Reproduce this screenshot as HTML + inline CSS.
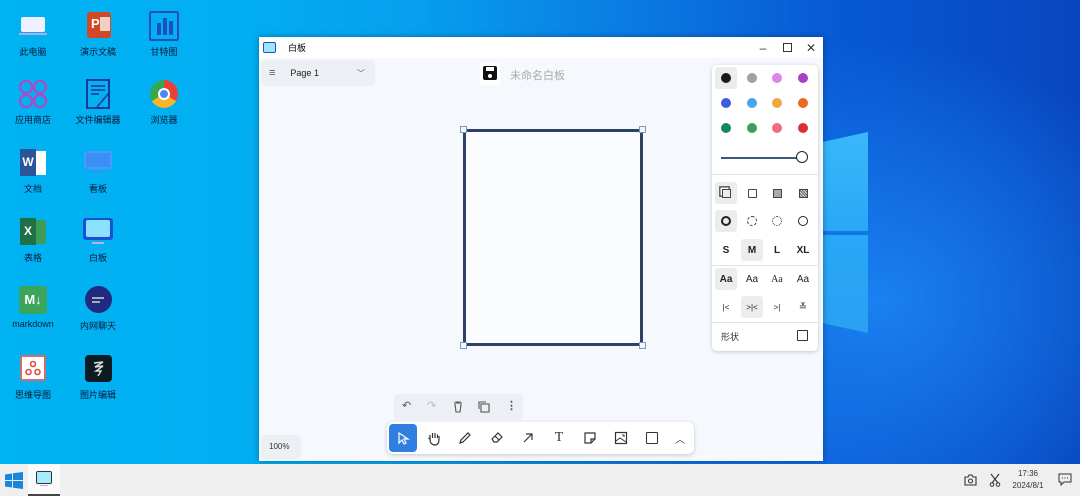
<!DOCTYPE html>
<html><head><meta charset="utf-8"><style>
*{margin:0;padding:0;box-sizing:border-box}
body{width:1080px;height:496px;overflow:hidden;position:relative;font-family:"Liberation Sans","Noto Sans CJK SC",sans-serif;
background:radial-gradient(ellipse 300px 260px at 880px 300px,#1a80f0 0%,rgba(20,110,235,0) 100%),linear-gradient(90deg,#00b3f2 0%,#02aef2 22%,#06a0ee 38%,#0a78e2 60%,#0858d4 78%,#0846c0 100%)}
.ic{position:absolute;width:60px;text-align:center;font-size:9px;color:#0a1a3a}
.ic .g{width:30px;height:30px;margin:0 auto 4px;position:relative}
.ic span{display:block;white-space:nowrap}
.win{position:absolute;left:259px;top:37px;width:564px;height:424px;background:#f5f8fc;box-shadow:0 0 6px rgba(0,0,0,.35)}
.tb{height:21px;background:#fff;font-size:9px;display:flex;align-items:center}
.pane{position:absolute;background:#fff;border-radius:5px;box-shadow:0 1px 4px rgba(0,0,0,.2)}
.dot{position:absolute;width:10px;height:10px;border-radius:50%}
.cell{position:absolute;width:22px;height:22px;display:flex;align-items:center;justify-content:center;font-size:10px;font-weight:bold;color:#222;border-radius:3px}
.sel{background:#ececec}
.tool{position:absolute;top:0;width:28px;height:28px;display:flex;align-items:center;justify-content:center}
</style></head><body>

<!-- windows logo panes -->
<div style="position:absolute;left:823px;top:132px;width:45px;height:99px;background:linear-gradient(180deg,#3ab8fa,#28a8f6);clip-path:polygon(0 10%,100% 0,100% 100%,0 100%)"></div>
<div style="position:absolute;left:823px;top:235px;width:45px;height:98px;background:linear-gradient(180deg,#28a8f6,#2aa0f2);clip-path:polygon(0 0,100% 0,100% 100%,0 90%)"></div>

<!-- desktop icons -->
<div class="ic" style="left:3px;top:11px"><div class="g"><div style="position:absolute;left:3px;top:6px;width:24px;height:15px;background:#eef0ff;border-radius:2px"></div><div style="position:absolute;left:1px;top:22px;width:28px;height:2px;background:#b8a8f0"></div></div><span>此电脑</span></div>
<div class="ic" style="left:68px;top:11px"><div class="g"><div style="position:absolute;left:4px;top:1px;width:24px;height:26px;background:#d24726;border-radius:3px;color:#fff;font-weight:bold;font-size:13px;line-height:24px;text-align:left;padding-left:4px">P</div><div style="position:absolute;left:17px;top:6px;width:10px;height:14px;background:#f3d0c4"></div></div><span>演示文稿</span></div>
<div class="ic" style="left:134px;top:11px"><div class="g"><div style="position:absolute;left:0;top:0;width:30px;height:30px;border:2px solid #1c4fc2;border-radius:2px"></div><div style="position:absolute;left:8px;top:12px;width:4px;height:12px;background:#1c4fc2"></div><div style="position:absolute;left:14px;top:7px;width:4px;height:17px;background:#1c4fc2"></div><div style="position:absolute;left:20px;top:10px;width:4px;height:14px;background:#1c4fc2"></div></div><span>甘特图</span></div>

<div class="ic" style="left:3px;top:79px"><div class="g"><svg width="30" height="30"><g fill="none" stroke="#a050c8" stroke-width="2.5"><circle cx="8" cy="8" r="6"/><circle cx="22" cy="8" r="6"/><circle cx="8" cy="22" r="6"/><circle cx="22" cy="22" r="6"/></g></svg></div><span>应用商店</span></div>
<div class="ic" style="left:68px;top:79px"><div class="g"><svg width="30" height="30"><rect x="4" y="1" width="22" height="28" fill="none" stroke="#1a3b9c" stroke-width="2"/><g stroke="#1a3b9c" stroke-width="1.6"><line x1="8" y1="7" x2="22" y2="7"/><line x1="8" y1="11" x2="22" y2="11"/><line x1="8" y1="15" x2="16" y2="15"/><line x1="14" y1="28" x2="26" y2="14"/></g></svg></div><span>文件编辑器</span></div>
<div class="ic" style="left:134px;top:79px"><div class="g"><div style="position:absolute;left:1px;top:1px;width:28px;height:28px;border-radius:50%;background:conic-gradient(#e94235 0 120deg,#f7b52b 120deg 240deg,#34a853 240deg 360deg)"></div><div style="position:absolute;left:9px;top:9px;width:12px;height:12px;border-radius:50%;background:#4a8af4;border:2px solid #fff"></div></div><span>浏览器</span></div>

<div class="ic" style="left:3px;top:148px"><div class="g"><div style="position:absolute;left:16px;top:3px;width:12px;height:24px;background:#fff"></div><div style="position:absolute;left:2px;top:1px;width:16px;height:27px;background:#2b5597;color:#fff;font-weight:bold;font-size:12px;line-height:27px">W</div></div><span>文档</span></div>
<div class="ic" style="left:68px;top:148px"><div class="g"><div style="position:absolute;left:1px;top:3px;width:28px;height:18px;background:#3a8ef5;border-radius:3px;border:2px solid #4a9cf8"></div><div style="position:absolute;left:8px;top:23px;width:14px;height:2px;background:#3a8ef5"></div></div><span>看板</span></div>

<div class="ic" style="left:3px;top:217px"><div class="g"><div style="position:absolute;left:16px;top:3px;width:12px;height:24px;background:#3f9b58"></div><div style="position:absolute;left:2px;top:1px;width:16px;height:27px;background:#1e7145;color:#fff;font-weight:bold;font-size:12px;line-height:27px">X</div></div><span>表格</span></div>
<div class="ic" style="left:68px;top:217px"><div class="g"><div style="position:absolute;left:0;top:1px;width:30px;height:22px;background:#1a50d8;border-radius:3px"></div><div style="position:absolute;left:3px;top:3px;width:24px;height:17px;background:#8ae2fc;border-radius:2px"></div><div style="position:absolute;left:9px;top:25px;width:12px;height:2px;background:#d0a8f0"></div></div><span>白板</span></div>

<div class="ic" style="left:3px;top:285px"><div class="g"><div style="position:absolute;left:1px;top:1px;width:28px;height:28px;background:#3ba55c;border-radius:3px;color:#fff;font-weight:bold;font-size:13px;line-height:28px">M↓</div></div><span>markdown</span></div>
<div class="ic" style="left:68px;top:285px"><div class="g"><div style="position:absolute;left:2px;top:1px;width:27px;height:27px;background:#1f2a80;border-radius:50%"></div><div style="position:absolute;left:9px;top:12px;width:12px;height:2px;background:#aab"></div><div style="position:absolute;left:9px;top:16px;width:8px;height:2px;background:#aab"></div></div><span>内网聊天</span></div>

<div class="ic" style="left:3px;top:354px"><div class="g"><div style="position:absolute;left:2px;top:1px;width:26px;height:26px;background:#fff;border:2px solid #d86a6a;border-radius:3px"></div><svg style="position:absolute;left:7px;top:6px" width="16" height="16"><g fill="none" stroke="#e04848" stroke-width="1.6"><circle cx="8" cy="4" r="2.5"/><circle cx="3.5" cy="12" r="2.5"/><circle cx="12.5" cy="12" r="2.5"/></g></svg></div><span>思维导图</span></div>
<div class="ic" style="left:68px;top:354px"><div class="g"><div style="position:absolute;left:2px;top:1px;width:27px;height:27px;background:#0d1a22;border-radius:4px"></div><svg style="position:absolute;left:9px;top:6px" width="14" height="18"><path d="M2 3 L11 2 L3 7 L11 6 L4 11 L9 11 L6 16" fill="none" stroke="#ddd" stroke-width="1.4"/></svg></div><span>图片编辑</span></div>

<!-- window -->
<div class="win">
 <div class="tb"><div style="margin-left:4px;width:13px;height:11px;border:1.5px solid #2050c8;background:#9ee6fb;border-radius:2px"></div><span style="margin-left:12px">白板</span>
  <div style="margin-left:auto;display:flex;gap:0;font-size:12px;color:#333">
   <span style="width:24px;text-align:center">–</span><span style="width:24px;text-align:center"><span style="display:inline-block;width:9px;height:9px;border:1.3px solid #333"></span></span><span style="width:24px;text-align:center">✕</span></div></div>
 <!-- page selector -->
 <div style="position:absolute;left:2px;top:23px;width:114px;height:26px;background:#eceff3;border-radius:4px;font-size:9px;display:flex;align-items:center;color:#222">
  <span style="margin-left:8px;font-size:11px;color:#555">≡</span><span style="margin-left:15px">Page 1</span><span style="margin-left:auto;margin-right:10px;font-size:8px;color:#555">﹀</span></div>
 <!-- save -->
 <div style="position:absolute;left:221px;top:26px;width:20px;height:22px;background:#fff;border-radius:3px"><div style="position:absolute;left:3px;top:3px;width:14px;height:14px;background:#111;border-radius:2px"></div><div style="position:absolute;left:6px;top:4px;width:8px;height:4px;background:#fff"></div><div style="position:absolute;left:8px;top:11px;width:4px;height:4px;background:#fff;border-radius:50%"></div></div>
 <div style="position:absolute;left:251px;top:30px;font-size:11px;color:#aaa">未命名白板</div>
 <!-- rectangle -->
 <div style="position:absolute;left:204px;top:92px;width:180px;height:217px;border:3px solid #2d4264;border-radius:2px;background:#fafcff"></div>
 <div style="position:absolute;left:201px;top:89px;width:7px;height:7px;background:#f3f6fb;border:1px solid #7a9cc0"></div>
 <div style="position:absolute;left:380px;top:89px;width:7px;height:7px;background:#f3f6fb;border:1px solid #7a9cc0"></div>
 <div style="position:absolute;left:201px;top:305px;width:7px;height:7px;background:#f3f6fb;border:1px solid #7a9cc0"></div>
 <div style="position:absolute;left:380px;top:305px;width:7px;height:7px;background:#f3f6fb;border:1px solid #7a9cc0"></div>

 <!-- style pane -->
 <div class="pane" style="left:453px;top:28px;width:106px;height:286px">
  <div class="cell sel" style="left:3px;top:2px"></div>
  <div class="dot" style="left:9px;top:8px;background:#1a1a1a"></div><div class="dot" style="left:35px;top:8px;background:#a0a0a0"></div><div class="dot" style="left:60px;top:8px;background:#e082ec"></div><div class="dot" style="left:86px;top:8px;background:#aa3ec8"></div>
  <div class="dot" style="left:9px;top:33px;background:#3c5ede"></div><div class="dot" style="left:35px;top:33px;background:#48a4ec"></div><div class="dot" style="left:60px;top:33px;background:#eeaa40"></div><div class="dot" style="left:86px;top:33px;background:#ea6a22"></div>
  <div class="dot" style="left:9px;top:58px;background:#128a5a"></div><div class="dot" style="left:35px;top:58px;background:#3e9e58"></div><div class="dot" style="left:60px;top:58px;background:#ec6e82"></div><div class="dot" style="left:86px;top:58px;background:#de3030"></div>
  <div style="position:absolute;left:9px;top:92px;width:80px;height:2px;background:#3a5a80"></div>
  <div style="position:absolute;left:84px;top:86px;width:12px;height:12px;border-radius:50%;background:#fff;border:1.5px solid #222"></div>
  <div style="position:absolute;left:0;top:109px;width:106px;height:1px;background:#e4e4e4"></div>
  <div class="cell sel" style="left:3px;top:117px"><span style="width:9px;height:9px;border:1.3px solid #444;box-shadow:-2px -2px 0 -0.5px #fff,-2px -2px 0 .8px #444"></span></div>
  <div class="cell" style="left:29px;top:117px"><span style="width:9px;height:9px;border:1.3px solid #444;border-radius:1px"></span></div>
  <div class="cell" style="left:54px;top:117px"><span style="width:9px;height:9px;border:1.3px solid #444;background:#aaa"></span></div>
  <div class="cell" style="left:80px;top:117px"><span style="width:9px;height:9px;border:1.3px solid #444;background:repeating-linear-gradient(45deg,#666 0 1px,#ddd 1px 2px)"></span></div>
  <div class="cell sel" style="left:3px;top:145px"><span style="width:10px;height:10px;border:2.5px solid #222;border-radius:50%"></span></div>
  <div class="cell" style="left:29px;top:145px"><span style="width:10px;height:10px;border:1.3px dashed #333;border-radius:50%"></span></div>
  <div class="cell" style="left:54px;top:145px"><span style="width:10px;height:10px;border:1.3px dotted #333;border-radius:50%"></span></div>
  <div class="cell" style="left:80px;top:145px"><span style="width:10px;height:10px;border:1.5px solid #222;border-radius:50%"></span></div>
  <div class="cell" style="left:3px;top:174px">S</div><div class="cell sel" style="left:29px;top:174px">M</div><div class="cell" style="left:54px;top:174px">L</div><div class="cell" style="left:80px;top:174px">XL</div>
  <div style="position:absolute;left:0;top:200px;width:106px;height:1px;background:#e4e4e4"></div>
  <div class="cell sel" style="left:3px;top:203px;font-weight:bold">Aa</div><div class="cell" style="left:29px;top:203px;font-weight:normal">Aa</div><div class="cell" style="left:54px;top:203px;font-weight:normal;font-family:'Liberation Serif',serif">Aa</div><div class="cell" style="left:80px;top:203px;font-weight:normal">Aa</div>
  <div class="cell" style="left:3px;top:231px;font-weight:normal;font-size:8px">|&lt;</div><div class="cell sel" style="left:29px;top:231px;font-weight:normal;font-size:8px">&gt;|&lt;</div><div class="cell" style="left:54px;top:231px;font-weight:normal;font-size:8px">&gt;|</div><div class="cell" style="left:80px;top:231px;font-weight:normal;font-size:10px">≚</div>
  <div style="position:absolute;left:0;top:257px;width:106px;height:1px;background:#e4e4e4"></div>
  <div style="position:absolute;left:9px;top:265px;font-size:9px;color:#333">形状</div>
  <div style="position:absolute;left:85px;top:265px;width:11px;height:11px;border:1.3px solid #333;border-radius:1px"></div>
 </div>

 <!-- action bar -->
 <div style="position:absolute;left:135px;top:357px;width:129px;height:26px;background:#eceff3;border-radius:4px;font-size:11px;color:#555">
  <span style="position:absolute;left:8px;top:5px">↶</span><span style="position:absolute;left:33px;top:5px;color:#bbb">↷</span>
  <svg style="position:absolute;left:59px;top:7px" width="10" height="12"><path d="M1 2H9M3 2V1H7V2M2 3L3 11H7L8 3" fill="none" stroke="#555" stroke-width="1.1"/></svg>
  <svg style="position:absolute;left:84px;top:7px" width="12" height="12"><rect x="3" y="3" width="8" height="8" fill="none" stroke="#555" stroke-width="1.1"/><path d="M1 8V1H8" fill="none" stroke="#555" stroke-width="1.1"/></svg>
  <span style="position:absolute;left:112px;top:5px;font-weight:bold">⋮</span></div>
 <div style="position:absolute;left:2px;top:398px;width:40px;height:24px;background:#eceff3;border-radius:4px;font-size:8px;color:#333;padding:7px 0 0 8px">100%</div>

 <!-- toolbar -->
 <div class="pane" style="left:128px;top:385px;width:307px;height:32px;border-radius:6px">
  <div class="tool" style="left:2px;top:2px;background:#2f7fe0;border-radius:4px"><svg width="14" height="14"><path d="M3 2L3 12L6 9L8 13L10 12L8 8L12 8Z" fill="none" stroke="#fff" stroke-width="1.2"/></svg></div>
  <div class="tool" style="left:33px;top:2px"><svg width="16" height="16"><path d="M4 9V5M6.5 8V3M9 8V3M11.5 8V4.5M4 9C4 13 6 15 9 15C12 15 13 12 13 9V6M4 9L2.5 8" fill="none" stroke="#333" stroke-width="1.2"/></svg></div>
  <div class="tool" style="left:64px;top:2px"><svg width="14" height="14"><path d="M2 12L3 9L10 2L12 4L5 11Z" fill="none" stroke="#333" stroke-width="1.2"/></svg></div>
  <div class="tool" style="left:96px;top:2px"><svg width="14" height="14"><path d="M2 8L8 2L12 6L7 11H4Z M5 5L9 9" fill="none" stroke="#333" stroke-width="1.2"/></svg></div>
  <div class="tool" style="left:127px;top:2px"><svg width="14" height="14"><path d="M3 11L11 3M5 3H11V9" fill="none" stroke="#333" stroke-width="1.2"/></svg></div>
  <div class="tool" style="left:158px;top:2px;font-family:'Liberation Serif',serif;font-size:14px;color:#333">T</div>
  <div class="tool" style="left:189px;top:2px"><svg width="14" height="14"><path d="M2 2H12V8L8 12H2Z M8 12V8H12" fill="none" stroke="#333" stroke-width="1.2"/></svg></div>
  <div class="tool" style="left:220px;top:2px"><svg width="14" height="14"><rect x="1.5" y="1.5" width="11" height="11" fill="none" stroke="#333" stroke-width="1.2"/><path d="M2 10L6 7L12 11M8 4H10V6" fill="none" stroke="#333" stroke-width="1"/></svg></div>
  <div class="tool" style="left:251px;top:2px"><div style="width:12px;height:12px;border:1.3px solid #333;border-radius:1px"></div></div>
  <div class="tool" style="left:279px;top:2px;font-size:10px;color:#333">︿</div>
 </div>
</div>

<!-- taskbar -->
<div style="position:absolute;left:0;top:464px;width:1080px;height:32px;background:#efefef">
 <svg style="position:absolute;left:5px;top:8px" width="18" height="17"><path d="M0 2.5L7 1.5V8H0Z M8 1.3L18 0V8H8Z M0 9H7V15.5L0 14.5Z M8 9H18V17L8 15.7Z" fill="#1a86d8"/></svg>
 <div style="position:absolute;left:28px;top:0;width:32px;height:32px;background:#fafafa"></div>
 <div style="position:absolute;left:36px;top:7px;width:16px;height:13px;border:1.5px solid #333;background:#a6ecfc;border-radius:2px"></div>
 <div style="position:absolute;left:40px;top:21px;width:8px;height:1px;background:#d8a0e8"></div>
 <div style="position:absolute;left:28px;top:30px;width:32px;height:2px;background:#444"></div>
 <svg style="position:absolute;left:964px;top:10px" width="13" height="12"><path d="M1 3H4L5 1H8L9 3H12V11H1Z" fill="none" stroke="#333" stroke-width="1.1"/><circle cx="6.5" cy="7" r="2" fill="none" stroke="#333" stroke-width="1.1"/></svg>
 <svg style="position:absolute;left:989px;top:9px" width="12" height="14"><path d="M2 1L9 10M10 1L3 10" stroke="#333" stroke-width="1.1"/><circle cx="3" cy="11.5" r="1.8" fill="none" stroke="#333"/><circle cx="9" cy="11.5" r="1.8" fill="none" stroke="#333"/></svg>
 <div style="position:absolute;left:1008px;top:4px;width:40px;text-align:center;font-size:8px;line-height:12px;color:#333">17:36<br>2024/8/1</div>
 <svg style="position:absolute;left:1058px;top:9px" width="14" height="13"><path d="M1 1H13V9H6L3 12V9H1Z" fill="none" stroke="#333" stroke-width="1"/><path d="M4 5H5M6.5 5H7.5M9 5H10" stroke="#333"/></svg>
</div>
</body></html>
